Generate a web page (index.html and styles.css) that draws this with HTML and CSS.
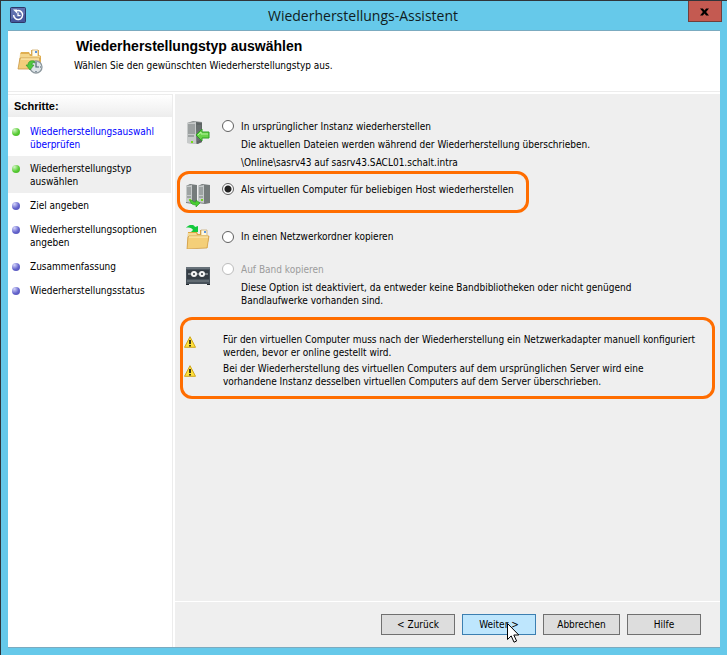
FILE: index.html
```html
<!DOCTYPE html>
<html lang="de">
<head>
    <meta charset="UTF-8">
    <meta name="viewport" content="width=device-width, initial-scale=1.0">
    <title>Wiederherstellungs-Assistent</title>
    <link rel="stylesheet" href="styles.css">
</head>
<body>
    <div class="window">
        <div class="titlebar">
            <svg class="app-icon" viewBox="0 0 16 16">
                <rect x="0.5" y="0.5" width="15" height="15" rx="1" fill="#46579c" stroke="#2c3768"/>
                <path d="M1 1h14v6L1 12z" fill="#7180bb" opacity="0.6"/>
                <path d="M6 4A4.5 4.5 0 1 1 3.6 8" fill="none" stroke="#fff" stroke-width="1.5"/>
                <path d="M3 2.5h4v4z" fill="#fff"/>
                <path d="M8 5.5v3.2h2.6" fill="none" stroke="#fff" stroke-width="1.3"/>
            </svg>
            <h1>Wiederherstellungs-Assistent</h1>
            <button class="close-button" type="button" aria-label="Schließen">
                <svg viewBox="0 0 10 8"><path d="M0 0h3.2L5 2.4 6.8 0H10L6.8 4 10 8H6.8L5 5.6 3.2 8H0l3.2-4z" fill="#000"/></svg>
            </button>
        </div>

        <div class="client">
            <header class="header">
                <svg class="header-icon" viewBox="0 0 26 26">
                    <path d="M3 6l1-2h8l1 2h1V2h8v5l2 1v13H2z" fill="#e0af52"/>
                    <path d="M15 2h6v7h-6z" fill="#fffbe9" stroke="#c89f52" stroke-width="0.7"/>
                    <path d="M18 3h2v2h-2z" fill="#5b93dc"/>
                    <path d="M3 6h9l1 2h10v12H3z" fill="#f4d68c"/>
                    <path d="M3 10h20l-2 11H1z" fill="#f2cd7b" stroke="#ca9848" stroke-width="0.8"/>
                    <path d="M4 11h18" stroke="#fff0bd"/>
                    <circle cx="19" cy="19" r="6" fill="#dde3e7" stroke="#8d989e" stroke-width="1.3"/>
                    <path d="M19 15v4h3M19 14v1M19 23v1M24 19h-1" fill="none" stroke="#4d6372" stroke-width="1.2"/>
                    <path d="M17 13c-4-1-6 1-6 4H9l4 5 4-5h-2c0-2 1-3 3-2z" fill="#4fc83f" stroke="#2d9427" stroke-width="0.6"/>
                </svg>
                <div class="header-text">
                    <h2>Wiederherstellungstyp auswählen</h2>
                    <p>Wählen Sie den gewünschten Wiederherstellungstyp aus.</p>
                </div>
            </header>

            <div class="content">
                <nav class="sidebar">
                    <h3>Schritte:</h3>
                    <ol class="steps">
                        <li class="done"><a href="#">Wiederherstellungsauswahl überprüfen</a></li>
                        <li class="done current">Wiederherstellungstyp auswählen</li>
                        <li>Ziel angeben</li>
                        <li>Wiederherstellungsoptionen angeben</li>
                        <li>Zusammenfassung</li>
                        <li>Wiederherstellungsstatus</li>
                    </ol>
                </nav>

                <form class="main">
                    <div class="options">
                        <div class="option">
                            <svg class="option-icon" viewBox="0 0 24 24">
                                <path d="M1 2l6-2 9 1v20l-4 2-11-1z" fill="#878c8c"/>
                                <path d="M10 1l6 1v19l-5 2z" fill="#5e6464"/>
                                <path d="M1 2l9-1v22l-9-1z" fill="#c7caca"/>
                                <path d="M2 4h7M2 6h7M2 8h7M2 10h7M2 12h7M2 15h6" stroke="#737979"/>
                                <path d="M12 4v16M14 4v15" stroke="#7f8585" stroke-width="0.7"/>
                                <path d="M5 20h2v2H5z" fill="#74dc18"/>
                                <path d="M10 14l6-6v3h7v6h-7v3z" fill="#69d449" stroke="#2f9e25"/>
                                <path d="M12 14l3-3v2h7" fill="none" stroke="#b6f29d"/>
                            </svg>
                            <input type="radio" name="type" id="original">
                            <label for="original">In ursprünglicher Instanz wiederherstellen</label>
                            <div class="description">
                                <p>Die aktuellen Dateien werden während der Wiederherstellung überschrieben.</p>
                                <p>\Online\sasrv43 auf sasrv43.SACL01.schalt.intra</p>
                            </div>
                        </div>

                        <div class="option highlight">
                            <svg class="option-icon" viewBox="0 0 24 24">
                                <path d="M0 2l4-2 7 1v18l-4 1-7-1z" fill="#757b7b"/>
                                <path d="M0 2l6-1v18l-6-1z" fill="#c6caca"/>
                                <path d="M1 4h4M1 6h4M1 8h4M1 10h4M1 13h4" stroke="#767c7c"/>
                                <path d="M12 2l4-2 8 1v18l-5 1-7-1z" fill="#757b7b"/>
                                <path d="M12 2l6-1v18l-6-1z" fill="#c6caca"/>
                                <path d="M13 4h4M13 6h4M13 8h4M13 10h4M13 13h4" stroke="#767c7c"/>
                                <path d="M3 16h2M15 16h2" stroke="#73d91c" stroke-width="2"/>
                                <path d="M4 17c1 3 3 4 6 4v2l4-4-4-3v2c-2 0-3 0-4-2z" fill="#49ce31" stroke="#249322" stroke-width="0.6"/>
                            </svg>
                            <input type="radio" name="type" id="virtual" checked>
                            <label for="virtual">Als virtuellen Computer für beliebigen Host wiederherstellen</label>
                        </div>

                        <div class="option folder">
                            <svg class="option-icon" viewBox="0 0 24 24">
                                <path d="M2 7h9l1 2h2V5h7v5l2 2-2 11H1z" fill="#dda744"/>
                                <path d="M15 5h6v8h-6z" fill="#fff8dc" stroke="#ba9350" stroke-width="0.6"/>
                                <path d="M18 6h2v2h-2z" fill="#5f97e0"/>
                                <path d="M2 8h8l1 2h11v13H2z" fill="#f5da94"/>
                                <path d="M2 12l1-1h20l-2 12-20 1z" fill="#f4cf79" stroke="#cc9740" stroke-width="0.7"/>
                                <path d="M3 12h19" stroke="#fff0bd"/>
                                <path d="M0 3c3-4 8-4 9-1l3-1v6H5l2-2C6 3 3 2 0 3z" fill="#12c93c"/>
                            </svg>
                            <input type="radio" name="type" id="network">
                            <label for="network">In einen Netzwerkordner kopieren</label>
                        </div>

                        <div class="option tape">
                            <svg class="option-icon" viewBox="0 0 24 24">
                                <path d="M0 3h24v17H0z" fill="#48525b"/>
                                <path d="M0 3h24v2H0z" fill="#68727a"/>
                                <path d="M1 6h22v9H1z" fill="#343c44"/>
                                <path d="M1 17h22" stroke="#7c868c"/>
                                <path d="M0 20h3v1H0zM21 20h3v1h-3z" fill="#20262b"/>
                                <path d="M2 10h20" stroke="#c3c8cb"/>
                                <circle cx="8" cy="10" r="3" fill="#f4f4f4"/>
                                <circle cx="16" cy="10" r="3" fill="#f4f4f4"/>
                                <circle cx="8" cy="10" r="1" fill="#30373d"/>
                                <circle cx="16" cy="10" r="1" fill="#30373d"/>
                            </svg>
                            <input type="radio" name="type" id="tape" disabled>
                            <label for="tape">Auf Band kopieren</label>
                            <div class="description">
                                <p>Diese Option ist deaktiviert, da entweder keine Bandbibliotheken oder nicht genügend<br>Bandlaufwerke vorhanden sind.</p>
                            </div>
                        </div>

                        <div class="warnings">
                            <div class="warning">
                                <svg viewBox="0 0 12 12">
                                    <path d="M6 0.7L11.5 11.3H0.5z" fill="#ffe13a" stroke="#cfa51d" stroke-linejoin="round"/>
                                    <path d="M6 4v4M6 9v1.5" stroke="#111" stroke-width="1.6"/>
                                </svg>
                                <p>Für den virtuellen Computer muss nach der Wiederherstellung ein Netzwerkadapter manuell konfiguriert<br>werden, bevor er online gestellt wird.</p>
                            </div>
                            <div class="warning">
                                <svg viewBox="0 0 12 12">
                                    <path d="M6 0.7L11.5 11.3H0.5z" fill="#ffe13a" stroke="#cfa51d" stroke-linejoin="round"/>
                                    <path d="M6 4v4M6 9v1.5" stroke="#111" stroke-width="1.6"/>
                                </svg>
                                <p>Bei der Wiederherstellung des virtuellen Computers auf dem ursprünglichen Server wird eine<br>vorhandene Instanz desselben virtuellen Computers auf dem Server überschrieben.</p>
                            </div>
                        </div>
                    </div>

                    <footer class="footer">
                        <button type="button">&lt; Zurück</button>
                        <button type="button" class="next">Weiter &gt;
                            <svg class="cursor" viewBox="0 0 12 20">
                                <path d="M0.5 0.5v16l3.7-3.6 2.8 6.3 2.6-1.2-2.8-6h5z" fill="#fff" stroke="#000"/>
                            </svg>
                        </button>
                        <button type="button" class="cancel">Abbrechen</button>
                        <button type="button">Hilfe</button>
                    </footer>
                </form>
            </div>
        </div>
    </div>
</body>
</html>
```

FILE: styles.css
```css
* {
    box-sizing: border-box;
}
body {
    margin: 0;
    font-family: "DejaVu Sans Condensed", "Liberation Sans", sans-serif;
    font-size: 10px;
    line-height: 13px;
    color: #000000;
}
h1, h2, h3, p, ol {
    margin: 0;
    padding: 0;
}
.window {
    display: flex;
    flex-direction: column;
    min-height: 100vh;
    padding: 0 7px 7px;
    border-top: 1px solid #30353a;
    border-left: 1px solid #30353a;
    background-color: #66c9ea;
}
.titlebar {
    display: flex;
    justify-content: space-between;
    height: 29px;
}
.app-icon {
    width: 16px;
    height: 16px;
    margin: 6px 12px 0 2px;
}
.titlebar h1 {
    font-family: "Open Sans", "Noto Sans", sans-serif;
    font-size: 14px;
    line-height: 29px;
    font-weight: normal;
    color: #101c22;
}
.close-button {
    width: 34px;
    height: 21px;
    margin-right: -2px;
    padding: 0;
    border: 1px solid #703e3c;
    border-top: none;
    background-color: #c45a51;
}
.close-button svg {
    width: 9px;
    height: 8px;
}
.client {
    display: flex;
    flex-direction: column;
    flex: 1;
    border-top: 1px solid #7babc0;
    border-bottom: 1px solid #7babc0;
    background-color: #ffffff;
}
.header {
    display: flex;
    height: 61px;
    border-bottom: 1px solid #ececec;
}
.header-icon {
    width: 26px;
    height: 26px;
    margin: 17px 31px 0 9px;
}
.header-text {
    padding-top: 6px;
}
.header h2 {
    padding-left: 2px;
    font-family: "Liberation Sans", Arial, sans-serif;
    font-size: 14px;
    line-height: 18px;
}
.header p {
    margin-top: 4px;
}
.content {
    display: flex;
    flex: 1;
    gap: 2px;
    padding-top: 2px;
}
.sidebar {
    width: 165px;
    border-top: 1px solid #ececec;
    border-right: 1px solid #ececec;
}
.sidebar h3 {
    height: 22px;
    padding-left: 6px;
    background: linear-gradient(#ffffff, #ededed);
    font-family: "Liberation Sans", Arial, sans-serif;
    font-size: 11px;
    line-height: 22px;
}
.steps {
    padding-top: 2px;
    list-style: none;
}
.steps li {
    display: flex;
    gap: 10px;
    margin-right: 1px;
    padding: 6px 0 5px 4px;
}
.steps li::before {
    content: "";
    flex: none;
    width: 8px;
    height: 8px;
    margin-top: 3px;
    border-radius: 50%;
    background: radial-gradient(circle at 30% 25%, #d4d4fa, #6464cc 55%, #5050b4);
}
.steps .done::before {
    background: radial-gradient(circle at 30% 25%, #d2f5c4, #58cc34 55%, #45b025);
}
.steps .current {
    background-color: #efefef;
}
.steps a {
    color: #0000ff;
    text-decoration: none;
}
.main {
    display: flex;
    flex-direction: column;
    flex: 1;
    background-color: #efefef;
}
.options {
    flex: 1;
    padding: 26px 5px 20px 2px;
}
.option {
    display: grid;
    grid-template-columns: 30px 13px 1fr;
    column-gap: 6px;
    align-items: start;
    padding: 0 9px;
}
.option-icon {
    grid-row: 1 / 3;
    width: 24px;
    height: 24px;
    margin-top: 1px;
}
.option input {
    appearance: none;
    width: 12px;
    height: 12px;
    margin: 0;
    border: 1px solid #606060;
    border-radius: 50%;
    background-color: #ffffff;
}
.option input:checked {
    background: radial-gradient(circle, #222222 3px, #ffffff 4px);
}
.option input:disabled {
    border-color: #bcbcbc;
}
.option input:disabled + label {
    color: #9c9c9c;
}
.description {
    grid-column: 3;
    padding-top: 5px;
}
.description p + p {
    margin-top: 5px;
}
.highlight {
    width: fit-content;
    margin-top: 2px;
    padding: 9px 12px 2px 6px;
    border: 3px solid #ff6d00;
    border-radius: 12px;
}
.folder {
    align-items: center;
    margin-top: 11px;
}
.folder .option-icon {
    grid-row: 1;
}
.tape {
    margin-top: 14px;
}
.warnings {
    display: flex;
    flex-direction: column;
    gap: 3px;
    margin: 10px 0 0 3px;
    padding: 13px 4px 8px 1px;
    border: 3px solid #ff6d00;
    border-radius: 12px;
}
.warning {
    display: flex;
    gap: 27px;
}
.warning svg {
    flex: none;
    width: 12px;
    height: 12px;
    margin-top: 3px;
}
.footer {
    display: flex;
    justify-content: flex-end;
    gap: 7px;
    padding: 12px 19px 12px;
    border-top: 1px solid #ffffff;
}
.footer button {
    position: relative;
    width: 74px;
    height: 21px;
    padding: 0;
    border: 1px solid #707070;
    background-color: #dddddd;
    font: inherit;
    color: inherit;
}
.footer .cancel {
    width: 77px;
}
.footer .next {
    border-color: #3c7fb1;
    background-color: #bee6fd;
}
.cursor {
    position: absolute;
    top: 8px;
    left: 44px;
    width: 12px;
    height: 20px;
}
```
